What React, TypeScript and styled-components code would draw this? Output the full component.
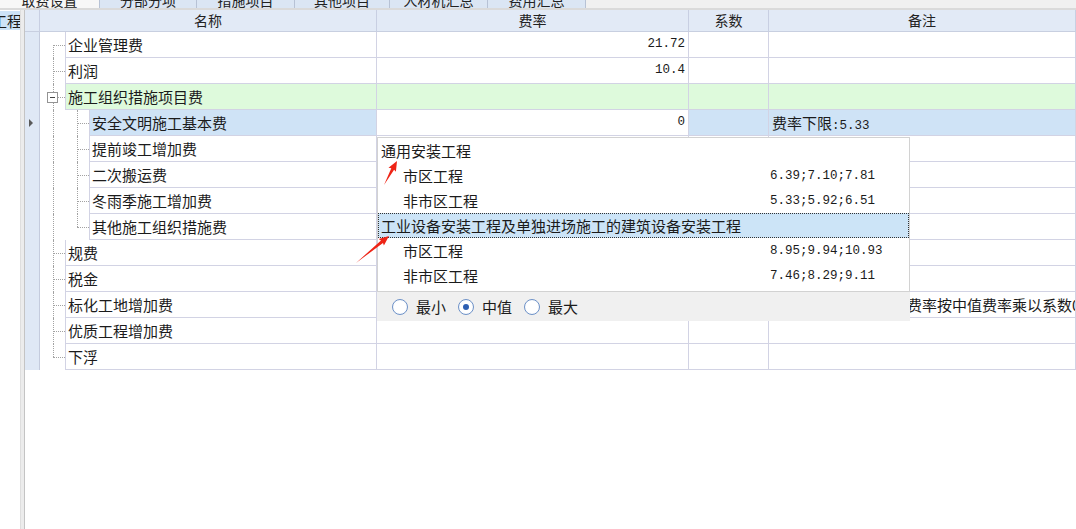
import React from "react";
import styled, { createGlobalStyle } from "styled-components";

const CJK = `"Noto Sans CJK SC", "Noto Sans", sans-serif`;
const MONO = `"Liberation Mono", "DejaVu Sans Mono", monospace`;
const LINE = "#d2d3e4";
const COLS = "15px 337px 312px 80px 1fr";

const GlobalStyle = createGlobalStyle`
  html, body { margin: 0; padding: 0; background: #ffffff; }
  body { font-family: ${CJK}; color: #1b1b1b; }
`;

const Page = styled.div`
  position: relative;
  width: 1076px;
  height: 529px;
  overflow: hidden;
  display: flex;
  flex-direction: column;
  background: #fff;
`;

const TabStrip = styled.div`
  height: 8px;
  flex: none;
  display: flex;
  background: #f0f0f0;
  border-bottom: 2px solid #dadada;
`;

const Tab = styled.div<{ $active?: boolean; $w: number }>`
  width: ${p => p.$w}px;
  height: 8px;
  flex: none;
  box-sizing: border-box;
  overflow: hidden;
  display: flex;
  align-items: flex-end;
  justify-content: center;
  padding-bottom: 1px;
  border-right: 1px solid #b7c2d5;
  background: ${p => (p.$active ? "#f7f7f7" : "#dbe6f4")};
  font-size: 14px;
  line-height: 14px;
  color: #222;
  white-space: nowrap;
`;

const Main = styled.div`
  position: relative;
  flex: 1;
  display: flex;
  min-height: 0;
`;

const SidePanel = styled.div`
  width: 20px;
  flex: none;
  overflow: hidden;
  padding-top: 1px;
`;

const SideItem = styled.div`
  height: 19px;
  background: #cde3f7;
  font-size: 15px;
  line-height: 19px;
  white-space: nowrap;
  span {
    display: inline-block;
    margin-left: -8px;
  }
`;

const Splitter = styled.div`
  width: 5px;
  flex: none;
  box-sizing: border-box;
  background: #ececec;
  border-left: 1px solid #dedede;
  border-right: 1px solid #c4c4c4;
`;

const Grid = styled.div`
  flex: 1;
  display: flex;
  flex-direction: column;
  min-width: 0;
`;

const Header = styled.div`
  display: grid;
  grid-template-columns: ${COLS};
  height: 22px;
  box-sizing: border-box;
  background: #e2eaf6;
  border-bottom: 1px solid #c8cfe0;
`;

const HeadCell = styled.div`
  border-right: 1px solid #c8cfe2;
  text-align: center;
  font-size: 14px;
  line-height: 21px;
  color: #222;
  white-space: nowrap;
  overflow: hidden;
`;

const Row = styled.div`
  display: grid;
  grid-template-columns: ${COLS};
  height: 26px;
`;

const Indicator = styled.div`
  background: #dfe8f5;
  border-right: 1px solid #c4cbdd;
  box-sizing: border-box;
  display: flex;
  align-items: center;
  justify-content: center;
`;

const Pointer = styled.span`
  width: 0;
  height: 0;
  margin-left: -3px;
  border-top: 4px solid transparent;
  border-bottom: 4px solid transparent;
  border-left: 4px solid #5a5a5a;
`;

const NameCol = styled.div`
  display: flex;
  min-width: 0;
`;

const Branch = styled.div<{ $w: number; $x: number; $kind: "first" | "tee" | "end" | "pass" }>`
  position: relative;
  width: ${p => p.$w}px;
  flex: none;
  &::before {
    content: "";
    position: absolute;
    left: ${p => p.$x}px;
    top: ${p => (p.$kind === "first" ? "50%" : "0")};
    bottom: ${p => (p.$kind === "end" ? "50%" : "0")};
    border-left: 1px dotted #a2a2a2;
  }
  &::after {
    content: "";
    display: ${p => (p.$kind === "pass" ? "none" : "block")};
    position: absolute;
    left: ${p => p.$x}px;
    right: 0;
    top: 50%;
    border-top: 1px dotted #a2a2a2;
  }
`;

const Toggle = styled.span`
  position: absolute;
  z-index: 1;
  left: 7px;
  top: 8px;
  width: 11px;
  height: 11px;
  box-sizing: border-box;
  border: 1px solid #939393;
  background: #fff;
  display: flex;
  align-items: center;
  justify-content: center;
  &::before {
    content: "";
    width: 5px;
    border-top: 1px solid #444;
  }
`;

const Cell = styled.div<{ $bg?: string }>`
  box-sizing: border-box;
  border-right: 1px solid ${LINE};
  border-bottom: 1px solid ${LINE};
  background: ${p => p.$bg || "#fff"};
  padding: 0 3px;
  font-size: 15px;
  line-height: 25px;
  white-space: nowrap;
  overflow: hidden;
`;

const NameCell = styled(Cell)`
  flex: 1;
  border-left: 1px solid ${LINE};
  padding-left: 2px;
`;

const RateCell = styled(Cell)`
  text-align: right;
  font-family: ${MONO};
  font-size: 12.5px;
`;

const Mono = styled.span`
  font-family: ${MONO};
  font-size: 12.5px;
`;

const Popup = styled.div`
  position: absolute;
  z-index: 2;
  left: 377px;
  top: 127px;
  width: 533px;
`;

const OptionList = styled.div`
  background: #fff;
  border: 1px solid #d2d2d2;
  padding-bottom: 3px;
`;

const Option = styled.div<{ $focused?: boolean }>`
  display: flex;
  align-items: center;
  height: 25px;
  background: ${p => (p.$focused ? "#cce4f7" : "transparent")};
  outline: ${p => (p.$focused ? "1px dotted #333" : "none")};
  outline-offset: -1px;
  white-space: nowrap;
`;

const OptName = styled.span<{ $child?: boolean }>`
  width: 392px;
  flex: none;
  box-sizing: border-box;
  padding-left: ${p => (p.$child ? 25 : 3)}px;
  font-size: 15px;
`;

const OptValue = styled.span`
  font-family: ${MONO};
  font-size: 12.5px;
`;

const Footer = styled.div`
  height: 29px;
  background: #f0f0f0;
  display: flex;
  align-items: center;
  gap: 10px;
  padding-left: 15px;
`;

const RadioItem = styled.label`
  display: flex;
  align-items: center;
  gap: 8px;
  font-size: 15px;
  padding-right: 2px;
`;

const RadioDot = styled.span<{ $on?: boolean }>`
  width: 16px;
  height: 16px;
  box-sizing: border-box;
  border-radius: 50%;
  border: 1px solid #6e92c8;
  background: radial-gradient(circle, #ffffff 55%, #e6eef8 100%);
  display: flex;
  align-items: center;
  justify-content: center;
  &::before {
    content: "";
    display: ${p => (p.$on ? "block" : "none")};
    width: 6px;
    height: 6px;
    border-radius: 50%;
    background: #2d5fb2;
  }
`;

const Overlay = styled.svg`
  position: absolute;
  left: 0;
  top: 0;
  z-index: 3;
  pointer-events: none;
`;

type Tone = "group" | "current";
type RowData = {
  name: string;
  level: 1 | 2;
  branch: "first" | "tee" | "end";
  rate?: string;
  note?: React.ReactNode;
  tone?: Tone;
  toggle?: boolean;
};

const rows: RowData[] = [
  { name: "企业管理费", level: 1, branch: "first", rate: "21.72" },
  { name: "利润", level: 1, branch: "tee", rate: "10.4" },
  { name: "施工组织措施项目费", level: 1, branch: "tee", tone: "group", toggle: true },
  {
    name: "安全文明施工基本费",
    level: 2,
    branch: "tee",
    tone: "current",
    rate: "0",
    note: (
      <>
        费率下限<Mono>:5.33</Mono>
      </>
    ),
  },
  { name: "提前竣工增加费", level: 2, branch: "tee" },
  { name: "二次搬运费", level: 2, branch: "tee" },
  { name: "冬雨季施工增加费", level: 2, branch: "tee" },
  { name: "其他施工组织措施费", level: 2, branch: "end" },
  { name: "规费", level: 1, branch: "tee" },
  { name: "税金", level: 1, branch: "tee" },
  { name: "标化工地增加费", level: 1, branch: "tee", note: "省标化工地增加费，费率按中值费率乘以系数0.7" },
  { name: "优质工程增加费", level: 1, branch: "tee" },
  { name: "下浮", level: 1, branch: "end" },
];

const options = [
  { name: "通用安装工程" },
  { name: "市区工程", value: "6.39;7.10;7.81", child: true },
  { name: "非市区工程", value: "5.33;5.92;6.51", child: true },
  { name: "工业设备安装工程及单独进场施工的建筑设备安装工程", focused: true },
  { name: "市区工程", value: "8.95;9.94;10.93", child: true },
  { name: "非市区工程", value: "7.46;8.29;9.11", child: true },
];

const tabs = [
  { label: "取费设置", w: 100 },
  { label: "分部分项", w: 97 },
  { label: "措施项目", w: 98 },
  { label: "其他项目", w: 95 },
  { label: "人材机汇总", w: 98 },
  { label: "费用汇总", w: 98 },
];

const arrowPoints = (x1: number, y1: number, x2: number, y2: number) => {
  const dx = x2 - x1;
  const dy = y2 - y1;
  const len = Math.hypot(dx, dy);
  const ux = dx / len;
  const uy = dy / len;
  const nx = -uy;
  const ny = ux;
  const head = 9;
  const bx = x2 - ux * head;
  const by = y2 - uy * head;
  const pt = (x: number, y: number) => `${x.toFixed(1)},${y.toFixed(1)}`;
  return [
    pt(x1, y1),
    pt(bx + nx * 1.6, by + ny * 1.6),
    pt(bx - ux * 1 + nx * 4.2, by - uy * 1 + ny * 4.2),
    pt(x2, y2),
    pt(bx - ux * 1 - nx * 4.2, by - uy * 1 - ny * 4.2),
    pt(bx - nx * 1.6, by - ny * 1.6),
  ].join(" ");
};

const rowBg = (tone?: Tone) => (tone === "group" ? "#defadc" : tone === "current" ? "#cfe3f6" : "#fff");

const FeeRow = ({ r }: { r: RowData }) => {
  const bg = rowBg(r.tone);
  return (
    <Row>
      <Indicator>{r.tone === "current" && <Pointer />}</Indicator>
      <NameCol>
        {r.level === 1 ? (
          <Branch $w={25} $x={13} $kind={r.branch}>
            {r.toggle && <Toggle />}
          </Branch>
        ) : (
          <>
            <Branch $w={25} $x={13} $kind="pass" />
            <Branch $w={24} $x={12} $kind={r.branch} />
          </>
        )}
        <NameCell $bg={bg}>{r.name}</NameCell>
      </NameCol>
      <RateCell $bg={r.tone === "current" ? "#fff" : bg}>{r.rate}</RateCell>
      <Cell $bg={bg} />
      <Cell $bg={bg}>{r.note}</Cell>
    </Row>
  );
};

export default function App() {
  return (
    <Page>
      <GlobalStyle />
      <TabStrip>
        {tabs.map((t, i) => (
          <Tab key={t.label} $w={t.w} $active={i === 0}>
            {t.label}
          </Tab>
        ))}
      </TabStrip>
      <Main>
        <SidePanel>
          <SideItem>
            <span>工程</span>
          </SideItem>
        </SidePanel>
        <Splitter />
        <Grid>
          <Header>
            <HeadCell />
            <HeadCell>名称</HeadCell>
            <HeadCell>费率</HeadCell>
            <HeadCell>系数</HeadCell>
            <HeadCell>备注</HeadCell>
          </Header>
          {rows.map((r, i) => (
            <FeeRow key={i} r={r} />
          ))}
        </Grid>
        <Popup>
          <OptionList>
            {options.map((o, i) => (
              <Option key={i} $focused={o.focused}>
                <OptName $child={o.child}>{o.name}</OptName>
                {o.value && <OptValue>{o.value}</OptValue>}
              </Option>
            ))}
          </OptionList>
          <Footer>
            <RadioItem>
              <RadioDot />
              最小
            </RadioItem>
            <RadioItem>
              <RadioDot $on />
              中值
            </RadioItem>
            <RadioItem>
              <RadioDot />
              最大
            </RadioItem>
          </Footer>
        </Popup>
      </Main>
      <Overlay width={1076} height={529} viewBox="0 0 1076 529">
        <polygon points={arrowPoints(384, 185, 397, 161)} fill="#ee2416" />
        <polygon points={arrowPoints(356, 263, 389, 236)} fill="#ee2416" />
      </Overlay>
    </Page>
  );
}
